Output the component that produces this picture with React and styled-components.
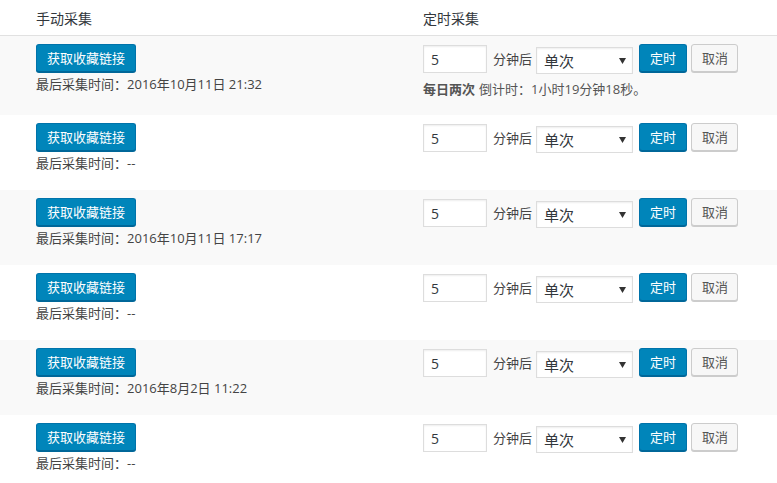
import React from "react";
import styled, { createGlobalStyle } from "styled-components";

const Global = createGlobalStyle`
  html, body { margin: 0; padding: 0; background: #fff; }
  body {
    font-family: "Open Sans", "Noto Sans CJK SC", sans-serif;
    font-size: 13px;
    color: #444;
  }
  * { box-sizing: border-box; }
`;

const Table = styled.div`
  width: 777px;
`;

const HeaderRow = styled.div`
  display: grid;
  grid-template-columns: 387px 1fr;
  padding: 9px 0 0 36px;
  height: 36px;
  border-bottom: 1px solid #e1e1e1;
`;

const HeaderCell = styled.div`
  font-size: 14px;
  line-height: 20px;
  color: #32373c;
`;

const Row = styled.div`
  display: grid;
  grid-template-columns: 387px 1fr;
  align-items: start;
  padding: 8px 0 16px 36px;
  background: ${(p) => (p.$alt ? "#f9f9f9" : "#fff")};
`;

const Cell = styled.div`
  display: flex;
  flex-direction: column;
  align-items: flex-start;
`;

const Button = styled.button`
  height: 28px;
  padding: 0 10px;
  margin: 0;
  border-radius: 3px;
  font-family: "Open Sans", "Noto Sans CJK SC", sans-serif;
  font-size: 13px;
  line-height: 26px;
  white-space: nowrap;
  cursor: pointer;
  border: 1px solid ${(p) => (p.$primary ? "#0073aa" : "#ccc")};
  border-bottom-color: ${(p) => (p.$primary ? "#006799" : "#ccc")};
  background: ${(p) => (p.$primary ? "#0085ba" : "#f7f7f7")};
  color: ${(p) => (p.$primary ? "#fff" : "#555")};
  box-shadow: 0 1px 0 ${(p) => (p.$primary ? "#006799" : "#ccc")};
  width: ${(p) => p.$w}px;
`;

const LastTime = styled.div`
  margin-top: 2px;
  line-height: 21px;
  color: #444;
`;

const FormLine = styled.div`
  display: flex;
  align-items: flex-start;
  height: 30px;
`;

const NumInput = styled.input`
  width: 64px;
  height: 28px;
  margin: 1px 0 0 0;
  padding: 0 7px;
  border: 1px solid #ddd;
  box-shadow: inset 0 1px 2px rgba(0, 0, 0, 0.07);
  background: #fff;
  font-family: "Open Sans", "Noto Sans CJK SC", sans-serif;
  font-size: 14px;
  color: #32373c;
  outline: none;
`;

const Unit = styled.span`
  margin: 0 4px 0 6px;
  line-height: 30px;
  color: #444;
`;

const SelectBox = styled.div`
  width: 97px;
  height: 27px;
  margin: 3px 6px 0 0;
  padding: 0 6px 0 7px;
  border: 1px solid #ddd;
  box-shadow: inset 0 1px 2px rgba(0, 0, 0, 0.07);
  background: #fff;
  display: flex;
  align-items: center;
  justify-content: space-between;
  font-size: 15px;
  color: #32373c;
`;

const Countdown = styled.div`
  margin-top: 5px;
  line-height: 20px;
  color: #555;
  b { font-weight: 700; margin-right: 4px; }
`;

const Gap = styled.span`
  width: 4px;
`;

const Arrow = () => (
  <svg width="7" height="6" viewBox="0 0 7 6">
    <path d="M0 0 H7 L3.5 6 Z" fill="#333" />
  </svg>
);

const rows = [
  { time: "2016年10月11日 21:32", countdown: true },
  { time: "--" },
  { time: "2016年10月11日 17:17" },
  { time: "--" },
  { time: "2016年8月2日 11:22" },
  { time: "--" },
];

export default function App() {
  return (
    <>
      <Global />
      <Table>
        <HeaderRow>
          <HeaderCell>手动采集</HeaderCell>
          <HeaderCell>定时采集</HeaderCell>
        </HeaderRow>
        {rows.map((r, i) => (
          <Row key={i} $alt={i % 2 === 0}>
            <Cell>
              <Button $primary $w={100}>获取收藏链接</Button>
              <LastTime>最后采集时间：{r.time}</LastTime>
            </Cell>
            <Cell>
              <FormLine>
                <NumInput defaultValue="5" />
                <Unit>分钟后</Unit>
                <SelectBox>
                  <span>单次</span>
                  <Arrow />
                </SelectBox>
                <Button $primary $w={48}>定时</Button>
                <Gap />
                <Button $w={47}>取消</Button>
              </FormLine>
              {r.countdown && (
                <Countdown>
                  <b>每日两次</b>倒计时：1小时19分钟18秒。
                </Countdown>
              )}
            </Cell>
          </Row>
        ))}
      </Table>
    </>
  );
}
